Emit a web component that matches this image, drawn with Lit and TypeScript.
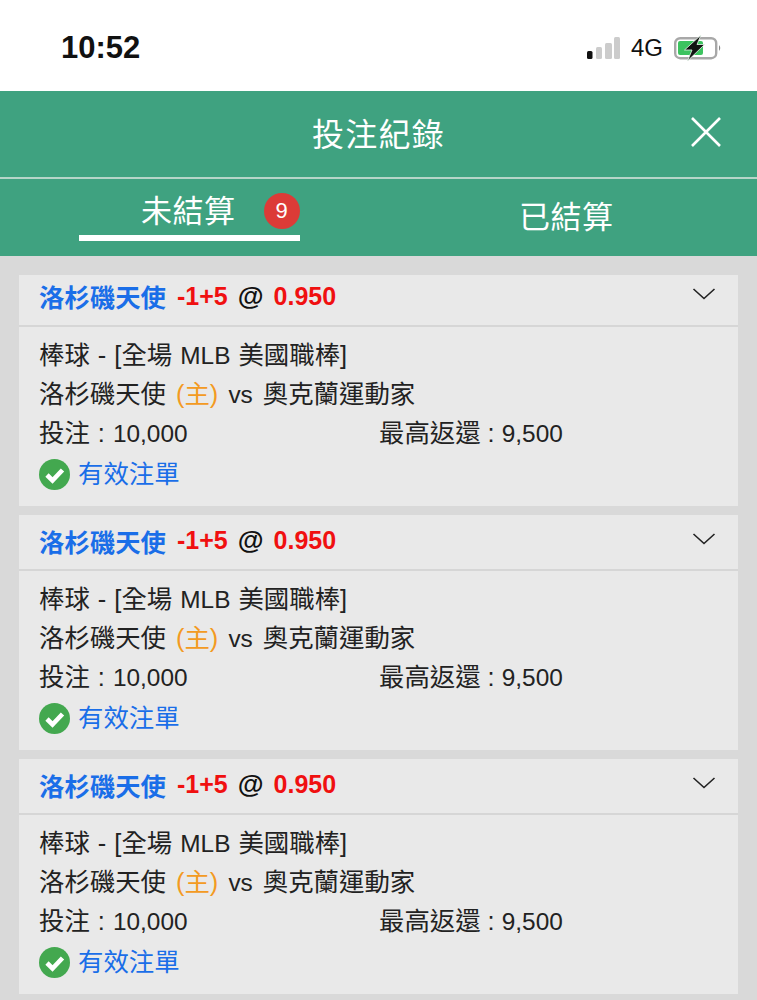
import { LitElement, html, css, svg } from "lit";
import { customElement } from "lit/decorators.js";

@customElement("app-root")
export class AppRoot extends LitElement {
  static styles = css`
    :host {
      display: block;
      width: 757px;
      height: 1000px;
      overflow: hidden;
      background: #d9d9d9;
      font-family: "Liberation Sans", "Noto Sans CJK TC", sans-serif;
      color: #222;
    }
    .status {
      height: 91px;
      background: #fff;
      display: flex;
      align-items: center;
      justify-content: space-between;
      padding: 5px 35px 0 61px;
      box-sizing: border-box;
    }
    .time { font-size: 31px; font-weight: 700; color: #111; }
    .sys { display: flex; align-items: center; gap: 11px; }
    .net { font-size: 24px; color: #111; }
    .signal, .batt { display: block; }
    .nav {
      height: 88px;
      box-sizing: border-box;
      background: #3fa280;
      color: #fff;
      display: flex;
      align-items: center;
      justify-content: center;
      position: relative;
      font-size: 32px;
      letter-spacing: 1.2px;
      border-bottom: 2px solid #b5d5c8;
      padding-bottom: 5px;
    }
    .close { position: absolute; left: 691px; top: 26px; display: block; }
    .tabs {
      height: 77px;
      background: #3fa280;
      display: flex;
      color: #fff;
      font-size: 31px;
      letter-spacing: 0.5px;
      padding-left: 79px;
      box-sizing: border-box;
      white-space: nowrap;
    }
    .tab-on {
      width: 221px;
      height: 62px;
      box-sizing: border-box;
      border-bottom: 6px solid #fff;
      display: flex;
      align-items: center;
      padding: 8px 0 0 62px;
      gap: 28px;
      flex: none;
    }
    .tab-on > span:first-child { margin-top: -5px; }
    .badge {
      width: 36px;
      height: 36px;
      border-radius: 50%;
      background: #dc3b37;
      font-size: 22px;
      letter-spacing: 0;
      display: flex;
      align-items: center;
      justify-content: center;
      flex: none;
    }
    .tab-off { margin-left: 219px; padding-top: 13px; }
    .list { padding: 19px 19px 0; display: flex; flex-direction: column; gap: 9.5px; }
    .card { background: #e9e9e9; }
    .head {
      height: 53.5px;
      box-sizing: border-box;
      display: flex;
      align-items: center;
      padding: 0 20px 2px 20px;
      font-size: 25.4px;
      font-weight: 700;
      gap: 11px;
      white-space: nowrap;
    }
    .cropped { height: 49.5px; padding-bottom: 7px; }
    .team { color: #1a6ee8; }
    .red { color: #f01010; }
    .at { color: #111; font-size: 26.5px; }
    .odds { font-size: 25px; display: flex; align-items: center; gap: 10px; }
    .chev { margin-left: auto; display: block; margin-top: -4px; margin-right: 2px; }
    .body {
      border-top: 2px solid #d6d6d6;
      height: 181px;
      box-sizing: border-box;
      padding: 9.5px 20px 0;
      font-size: 25.4px;
      line-height: 39px;
      color: #222;
      white-space: nowrap;
    }
    .latin { font-size: 24.4px; }
    .orange { color: #f39a22; }
    .line-league { word-spacing: 1px; }
    .line-teams { word-spacing: 3px; }
    .row { display: flex; }
    .stake { width: 340px; word-spacing: 1px; }
    .valid { display: flex; align-items: center; gap: 8px; color: #1a6ee8; height: 42px; }
  `;

  private battery() {
    return svg`<svg class="batt" width="48" height="26" viewBox="0 0 48 26">
      <rect x="1.2" y="3.2" width="41" height="20" rx="5" fill="none" stroke="#a8a8a8" stroke-width="2.4"/>
      <rect x="4" y="6" width="25" height="14" rx="2" fill="#3cc35f"/>
      <path d="M45 10 q2.5 3 0 6z" fill="#888"/>
      <path d="M27 0 L10.5 15 H18 L13.5 26 L30.5 9.5 H23 Z" fill="#111" stroke="#e9f7ec" stroke-width="0.8"/>
    </svg>`;
  }

  private card(cropped: boolean) {
    return html`<div class="card">
      <div class="head ${cropped ? "cropped" : ""}">
        <span class="team">洛杉磯天使</span>
        <span class="odds"><span class="red">-1+5</span><span class="at">@</span><span class="red">0.950</span></span>
        <svg class="chev" width="24" height="14" viewBox="0 0 24 14"><path d="M1.5 2 L12 11.5 L22.5 2" fill="none" stroke="#222" stroke-width="1.6"/></svg>
      </div>
      <div class="body">
        <div class="line-league">棒球 - [全場 <span class="latin">MLB</span> 美國職棒]</div>
        <div class="line-teams">洛杉磯天使 <span class="orange">(主)</span> <span class="latin">vs</span> 奧克蘭運動家</div>
        <div class="row">
          <div class="stake">投注 : <span class="latin">10,000</span></div>
          <div>最高返還 : <span class="latin">9,500</span></div>
        </div>
        <div class="valid">
          <svg width="31" height="31" viewBox="0 0 31 31"><circle cx="15.5" cy="15.5" r="15.5" fill="#43a84f"/><path d="M8 16 L13.5 21.5 L23.5 11" fill="none" stroke="#fff" stroke-width="4.6"/></svg>
          <span>有效注單</span>
        </div>
      </div>
    </div>`;
  }

  render() {
    return html`
      <div class="status">
        <span class="time">10:52</span>
        <div class="sys">
          <svg class="signal" width="33" height="23" viewBox="0 0 33 23">
            <rect x="0" y="14" width="5.5" height="8" rx="1.5" fill="#111"/>
            <rect x="9" y="10" width="6" height="12" rx="1.5" fill="#ccc"/>
            <rect x="18" y="6" width="7" height="16" rx="1.5" fill="#ccc"/>
            <rect x="27" y="0" width="6" height="22" rx="1.5" fill="#ccc"/>
          </svg>
          <span class="net">4G</span>
          ${this.battery()}
        </div>
      </div>
      <div class="nav">
        <span>投注紀錄</span>
        <svg class="close" width="30" height="30" viewBox="0 0 30 30"><path d="M1 1 L29 29 M29 1 L1 29" stroke="#fff" stroke-width="2.6" fill="none"/></svg>
      </div>
      <div class="tabs">
        <div class="tab-on"><span>未結算</span><span class="badge">9</span></div>
        <div class="tab-off">已結算</div>
      </div>
      <div class="list">
        ${this.card(true)}${this.card(false)}${this.card(false)}
      </div>
    `;
  }
}
